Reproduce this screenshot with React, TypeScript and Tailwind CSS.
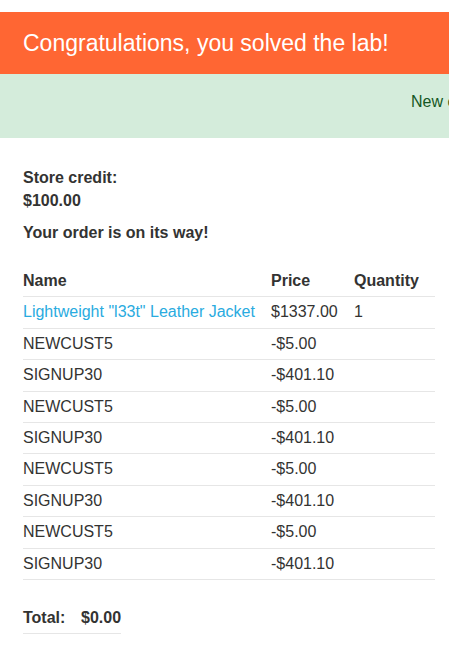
import React from 'react';

interface Line {
  name: string;
  price: string;
  qty?: string;
  link?: boolean;
}

const lines: Line[] = [
  { name: 'Lightweight "l33t" Leather Jacket', price: '$1337.00', qty: '1', link: true },
  { name: 'NEWCUST5', price: '-$5.00' },
  { name: 'SIGNUP30', price: '-$401.10' },
  { name: 'NEWCUST5', price: '-$5.00' },
  { name: 'SIGNUP30', price: '-$401.10' },
  { name: 'NEWCUST5', price: '-$5.00' },
  { name: 'SIGNUP30', price: '-$401.10' },
  { name: 'NEWCUST5', price: '-$5.00' },
  { name: 'SIGNUP30', price: '-$401.10' },
];

const base = 'py-[4px] text-left align-top leading-[22.4px] border-b border-[#e6e6e6]';
const cell = base + ' pr-[14px]';

export default function App() {
  return (
    <div className="w-[449px] h-[649px] overflow-hidden bg-white text-[#333332] text-[16px] font-['Liberation_Sans',Arial,sans-serif]">
      <div className="h-[12px]" />

      {/* solved banner */}
      <div className="h-[62px] bg-[#ff6633] flex items-center pl-[23px]">
        <h4 className="text-[23px] leading-none text-white whitespace-nowrap">
          Congratulations, you solved the lab!
        </h4>
      </div>

      <div className="h-[64px] bg-[#d4ecdb] pt-[16px] pl-[411px] whitespace-nowrap">
        <span className="leading-[22px] text-[#155724]">New customers use code at checkout: SIGNUP30</span>
      </div>

      <div className="px-[23px] pt-[28px]">
        <p className="font-bold leading-[23px]">Store credit:</p>
        <p className="font-bold leading-[23px]">$100.00</p>
        <p className="font-bold leading-[23px] mt-[9px]">Your order is on its way!</p>

        <table className="mt-[22px] w-[412px] border-collapse">
          <thead>
            <tr>
              <th className={cell + ' w-[248px] font-bold'}>Name</th>
              <th className={cell + ' w-[83px] font-bold'}>Price</th>
              <th className={cell + ' font-bold'}>Quantity</th>
            </tr>
          </thead>
          <tbody>
            {lines.map((l, i) => (
              <tr key={i}>
                <td className={cell}>
                  {l.link ? <a className="text-[#29abe0] whitespace-nowrap">{l.name}</a> : l.name}
                </td>
                <td className={cell}>{l.price}</td>
                <td className={cell}>{l.qty}</td>
              </tr>
            ))}
          </tbody>
        </table>

        <table className="mt-[23px] border-collapse">
          <tbody>
            <tr>
              <th className={base + ' w-[58px] font-bold'}>Total:</th>
              <th className={base + ' font-bold'}>$0.00</th>
            </tr>
          </tbody>
        </table>
      </div>
    </div>
  );
}
